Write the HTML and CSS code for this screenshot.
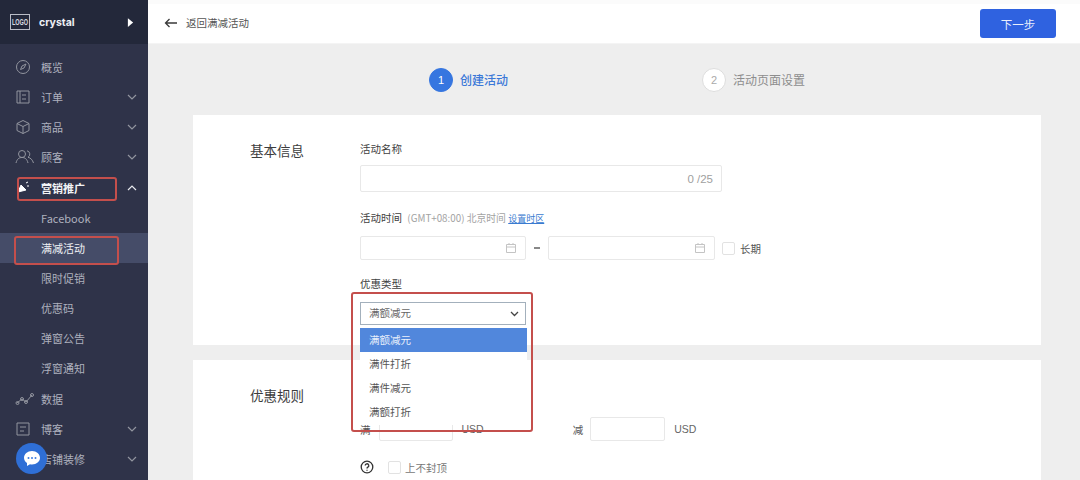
FILE: index.html
```html
<!DOCTYPE html>
<html lang="zh">
<head>
<meta charset="utf-8">
<title>创建活动</title>
<link rel="stylesheet" href="styles.css">
</head>
<body>
<div class="app">
  <aside class="side">
    <div class="brand">
      <span class="logo"><span class="logo-text">LOGO</span></span>
      <span class="shop">crystal</span>
      <svg class="play" width="7" height="9" viewBox="0 0 8 10"><path d="M1 0l6 5-6 5z" fill="#fff"/></svg>
    </div>
    <nav class="nav">
      <div class="row"><svg class="ic" viewBox="0 0 16 16"><circle cx="8" cy="8" r="6.5"/><path d="M11 5L7 7 5.500 10.500 9 9z"/></svg><span>概览</span></div>
      <div class="row"><svg class="ic" viewBox="0 0 16 16"><path d="M2 2h12v12H2zM5 2v12M7 6h4M7 10h4"/></svg><span>订单</span><svg class="chev" viewBox="0 0 10 6"><path d="M1 1l4 4 4-4"/></svg></div>
      <div class="row"><svg class="ic" viewBox="0 0 16 16"><path d="M8 1.500l6 3v7l-6 3-6-3v-7zM2 4.500l6 3 6-3M8 7.500v7"/></svg><span>商品</span><svg class="chev" viewBox="0 0 10 6"><path d="M1 1l4 4 4-4"/></svg></div>
      <div class="row"><svg class="ic wide" viewBox="0 0 20 16"><circle cx="7" cy="5" r="3.500"/><path d="M1 14c1-4 3-5.500 6-5.500s5 1.500 6 5.500M12 1.800a3.500 3.500 0 0 1 1 6.500c2.500.5 4.500 2.500 5.500 5.700"/></svg><span>顾客</span><svg class="chev" viewBox="0 0 10 6"><path d="M1 1l4 4 4-4"/></svg></div>
      <div class="row on"><svg class="ic solid" viewBox="0 0 16 16"><path d="M3 12l3-7 5 5zM11 3l2-1M12 6l2 0"/></svg><span>营销推广</span><svg class="chev" viewBox="0 0 10 6"><path d="M1 5l4-4 4 4"/></svg></div>
      <div class="row sub">Facebook</div>
      <div class="row sub cur">满减活动</div>
      <div class="row sub">限时促销</div>
      <div class="row sub">优惠码</div>
      <div class="row sub">弹窗公告</div>
      <div class="row sub">浮窗通知</div>
      <div class="row"><svg class="ic wide" viewBox="0 0 20 16"><path d="M2 12l5-4 4 3 6-7"/><circle cx="2.500" cy="12" r="1.500"/><circle cx="7" cy="8" r="1.500"/><circle cx="11" cy="11" r="1.500"/><circle cx="17" cy="4" r="1.500"/></svg><span>数据</span></div>
      <div class="row"><svg class="ic" viewBox="0 0 16 16"><path d="M2 2h12v12H2zM5 6h6M5 10h4"/></svg><span>博客</span><svg class="chev" viewBox="0 0 10 6"><path d="M1 1l4 4 4-4"/></svg></div>
      <div class="row"><span class="ic-gap"></span><span>店铺装修</span><svg class="chev" viewBox="0 0 10 6"><path d="M1 1l4 4 4-4"/></svg></div>
    </nav>
  </aside>

  <main class="main">
    <div class="topstrip"></div>
    <header class="bar">
      <svg class="back" width="14" height="10" viewBox="0 0 14 10"><path d="M13 5H1.500M5.500 1L1.500 5l4 4"/></svg>
      <span class="back-text">返回满减活动</span>
      <button class="next">下一步</button>
    </header>

    <div class="steps">
      <div class="step active"><span class="num">1</span><span>创建活动</span></div>
      <div class="step"><span class="num">2</span><span>活动页面设置</span></div>
    </div>

    <section class="card first">
      <h2 class="card-title">基本信息</h2>
      <div class="form">
        <label class="lbl">活动名称</label>
        <div class="input wide-input"><span class="count">0 /25</span></div>
        <label class="lbl second">活动时间 <small>(GMT+08:00) 北京时间</small> <a class="link">设置时区</a></label>
        <div class="dates">
          <div class="input date"><svg class="cal" viewBox="0 0 12 12"><path d="M1.500 2.500h9v8h-9zM1.500 5h9M4 1v2M8 1v2"/></svg></div>
          <span class="dash"></span>
          <div class="input date"><svg class="cal" viewBox="0 0 12 12"><path d="M1.500 2.500h9v8h-9zM1.500 5h9M4 1v2M8 1v2"/></svg></div>
          <span class="check"></span>
          <span class="txt">长期</span>
        </div>
        <label class="lbl third">优惠类型</label>
        <div class="select">
          <span>满额减元</span>
          <svg width="9" height="6" viewBox="0 0 9 6"><path d="M1 1l3.500 3.500L8 1"/></svg>
        </div>
      </div>
    </section>

    <section class="card secondcard">
      <h2 class="card-title">优惠规则</h2>
      <div class="form rules">
        <div class="rule">
          <span class="txt">满</span><div class="input amount"></div><span class="unit">USD</span>
          <span class="txt minus">减</span><div class="input amount"></div><span class="unit">USD</span>
        </div>
        <div class="cap">
          <svg class="help" width="14" height="14" viewBox="0 0 14 14"><circle cx="7" cy="7" r="5.800"/><path d="M5.200 5.600a1.800 1.800 0 1 1 2.700 1.500c-.6.400-.9.700-.9 1.300M7 9.800v1"/></svg>
          <span class="check"></span>
          <span class="txt">上不封顶</span>
        </div>
      </div>
    </section>
  </main>
</div>

<ul class="menu">
  <li class="sel">满额减元</li>
  <li>满件打折</li>
  <li>满件减元</li>
  <li>满额打折</li>
</ul>
<div class="mark m1"></div>
<div class="mark m2"></div>
<div class="mark m3"></div>
<div class="chat"><svg width="18" height="17" viewBox="0 0 18 17"><path d="M9 1c4.500 0 8 3 8 6.800s-3.500 6.700-8 6.700c-.7 0-1.300 0-2-.2L4 16v-3C2.200 11.800 1 10 1 7.800 1 4 4.500 1 9 1z" fill="#fff"/><circle cx="5.500" cy="8" r="1" fill="#3b7be0"/><circle cx="9" cy="8" r="1" fill="#3b7be0"/><circle cx="12.500" cy="8" r="1" fill="#3b7be0"/></svg></div>
</body>
</html>
```
FILE: styles.css
```css
* { box-sizing: border-box; }
html, body { margin: 0; height: 480px; overflow: hidden; }
body {
  position: relative;
  width: 1080px;
  font-family: "Noto Sans CJK SC", "Liberation Sans", sans-serif;
  font-size: 11px;
  color: #4a4a4a;
  background: #eee;
}
.app { display: flex; height: 480px; }

.side { width: 148px; flex: none; background: #2f3349; color: #aeb1be; }
.brand {
  height: 44px;
  background: #23283a;
  display: flex;
  align-items: center;
  padding: 0 14px 0 10px;
}
.logo {
  border: 1px solid #b9bcc6;
  width: 20px;
  height: 16px;
  display: flex;
  align-items: center;
  justify-content: center;
}
.logo-text {
  color: #d8dae0;
  font: bold 5.500px/8px "Liberation Sans", sans-serif;
  transform: scaleY(1.5);
}
.shop { margin-left: 9px; color: #eef0f4; font: bold 10.500px "Inter", "Liberation Sans", sans-serif; }
.play { margin-left: auto; }
.nav { padding-top: 8px; }
.row {
  height: 30.150px;
  display: flex;
  align-items: center;
  padding-left: 15px;
  position: relative;
}
.row span:not(.ic-gap) { margin-left: 10px; }
.ic { width: 16px; height: 16px; fill: none; stroke: #92959f; stroke-width: 1; flex: none; }
.ic.wide { width: 20px; margin-right: -4px; }
.ic.solid { fill: #fff; stroke: #fff; }
.ic-gap { width: 16px; flex: none; }
.chev { position: absolute; left: 127px; top: 12px; width: 10px; height: 6px; fill: none; stroke: #92959f; stroke-width: 1.200; }
.row.on { color: #f2f3f6; font-weight: 700; }
.row.on .chev { stroke: #e8e9ee; }
.row.sub { padding-left: 41px; }
.row.cur { background: #454c68; color: #eef0f4; }

.main { flex: 1; min-width: 0; display: flex; flex-direction: column; align-items: stretch; }
.topstrip { height: 4px; background: #fbfbfb; flex: none; }
.bar {
  height: 40px;
  flex: none;
  background: #fff;
  border-bottom: 1px solid #f4f4f4;
  display: flex;
  align-items: center;
  padding: 0 24px 0 16px;
}
.back { fill: none; stroke: #3a3a3a; stroke-width: 1.300; margin-top: -2px; }
.back-text { margin-left: 8px; font-size: 10.500px; color: #555; margin-top: -2px; }
.next {
  margin-left: auto;
  width: 76px;
  height: 29px;
  border: 0;
  border-radius: 3px;
  background: #2f62e0;
  color: #e8eefc;
  font: 11.500px "Noto Sans CJK SC", sans-serif;
}

.steps { height: 71px; flex: none; display: flex; padding: 0 0 0 281px; align-items: center; }
.step { display: flex; align-items: center; gap: 7px; font-size: 12px; color: #8d8d8d; }
.step.active { color: #3b78d8; font-weight: 500; width: 273px; }
.num {
  width: 24px;
  height: 24px;
  border-radius: 50%;
  display: flex;
  align-items: center;
  justify-content: center;
  background: #fff;
  border: 1px solid #ddd;
  font: 11px "Liberation Sans", sans-serif;
  color: #aaa;
}
.step.active .num { background: #3676e0; border-color: #3676e0; color: #fff; }

.card { margin-left: 45px; width: 848px; background: #fff; display: flex; flex: none; }
.card.first { height: 230px; padding-top: 25px; }
.card.secondcard { margin-top: 15px; height: 130px; padding-top: 25px; }
.card-title {
  margin: -1px 0 0;
  width: 167px;
  padding-left: 57px;
  font-size: 13.500px;
  font-weight: 400;
  color: #3d3d3d;
  line-height: 22px;
  flex: none;
}
.form { display: flex; flex-direction: column; align-items: flex-start; }
.lbl { font-size: 10.500px; line-height: 18px; color: #3f3f3f; }
.lbl small { font-size: 9.800px; color: #a3a3a3; margin-left: 3px; }
.link { color: #3a7bd0; font-size: 9px; text-decoration: underline; }
.second { margin-top: 17px; }
.third { margin-top: 15px; }
.input { background: #fff; border: 1px solid #e8e8e8; border-radius: 2px; }
.wide-input {
  margin-top: 7px;
  width: 362px;
  height: 27px;
  display: flex;
  align-items: center;
  justify-content: flex-end;
  padding-right: 8px;
  color: #a0a0a0;
  font: 11.500px "Liberation Sans", sans-serif;
}
.dates { margin-top: 8px; display: flex; align-items: center; height: 24px; }
.date { width: 166px; height: 24px; display: flex; align-items: center; justify-content: flex-end; padding-right: 8px; }
.date + .dash + .date { width: 167px; }
.cal { width: 12px; height: 12px; fill: none; stroke: #c4c4c4; stroke-width: 1; }
.dash { width: 6px; height: 2px; margin: 0 8px; background: #888; }
.check { width: 13px; height: 13px; border: 1px solid #e2e2e2; border-radius: 2px; flex: none; background: #fff; }
.dates .check { margin-left: 7px; }
.txt { font-size: 10.500px; color: #555; }
.dates .txt { margin-left: 5px; }
.select {
  margin-top: 9px;
  width: 166px;
  height: 23px;
  border: 1px solid #a3b0bc;
  display: flex;
  align-items: center;
  justify-content: space-between;
  padding: 0 6px 2px 8px;
  font-size: 10.500px;
  color: #666;
}
.select svg { fill: none; stroke: #444; stroke-width: 1.300; margin-top: 2px; }

.rules { padding-top: 32px; }
.rule { display: flex; align-items: center; height: 24px; }
.amount { width: 74px; height: 24px; margin-left: 8px; }
.rule .minus + .amount { width: 75px; margin-left: 7px; }
.unit { margin-left: 9px; font: 10.500px "Liberation Sans", sans-serif; color: #666; }
.minus { margin-left: 89px; }
.cap { margin-top: 14px; display: flex; align-items: center; height: 24px; }
.help { fill: none; stroke: #333; stroke-width: 1.300; }
.cap .check { margin-left: 14px; }
.cap .txt { margin-left: 4px; color: #777; }

.menu {
  position: absolute;
  left: 360px;
  top: 328px;
  width: 167px;
  height: 97px;
  margin: 0;
  padding: 0;
  list-style: none;
  background: #fff;
  font-size: 10.500px;
  color: #555;
}
.menu li { height: 24px; line-height: 24px; padding-left: 9px; }
.menu li.sel { background: #5187dc; color: #eaf0fb; }
.mark { position: absolute; border: 2px solid #c44f4c; border-radius: 3px; }
.m1 { left: 17px; top: 177px; width: 100px; height: 24px; }
.m2 { left: 14px; top: 236px; width: 105px; height: 29px; }
.m3 { left: 351px; top: 292px; width: 182px; height: 140px; }
.chat {
  position: absolute;
  left: 16px;
  top: 443px;
  width: 31px;
  height: 31px;
  border-radius: 50%;
  background: #2f6fd6;
  display: flex;
  align-items: center;
  justify-content: center;
}
```
